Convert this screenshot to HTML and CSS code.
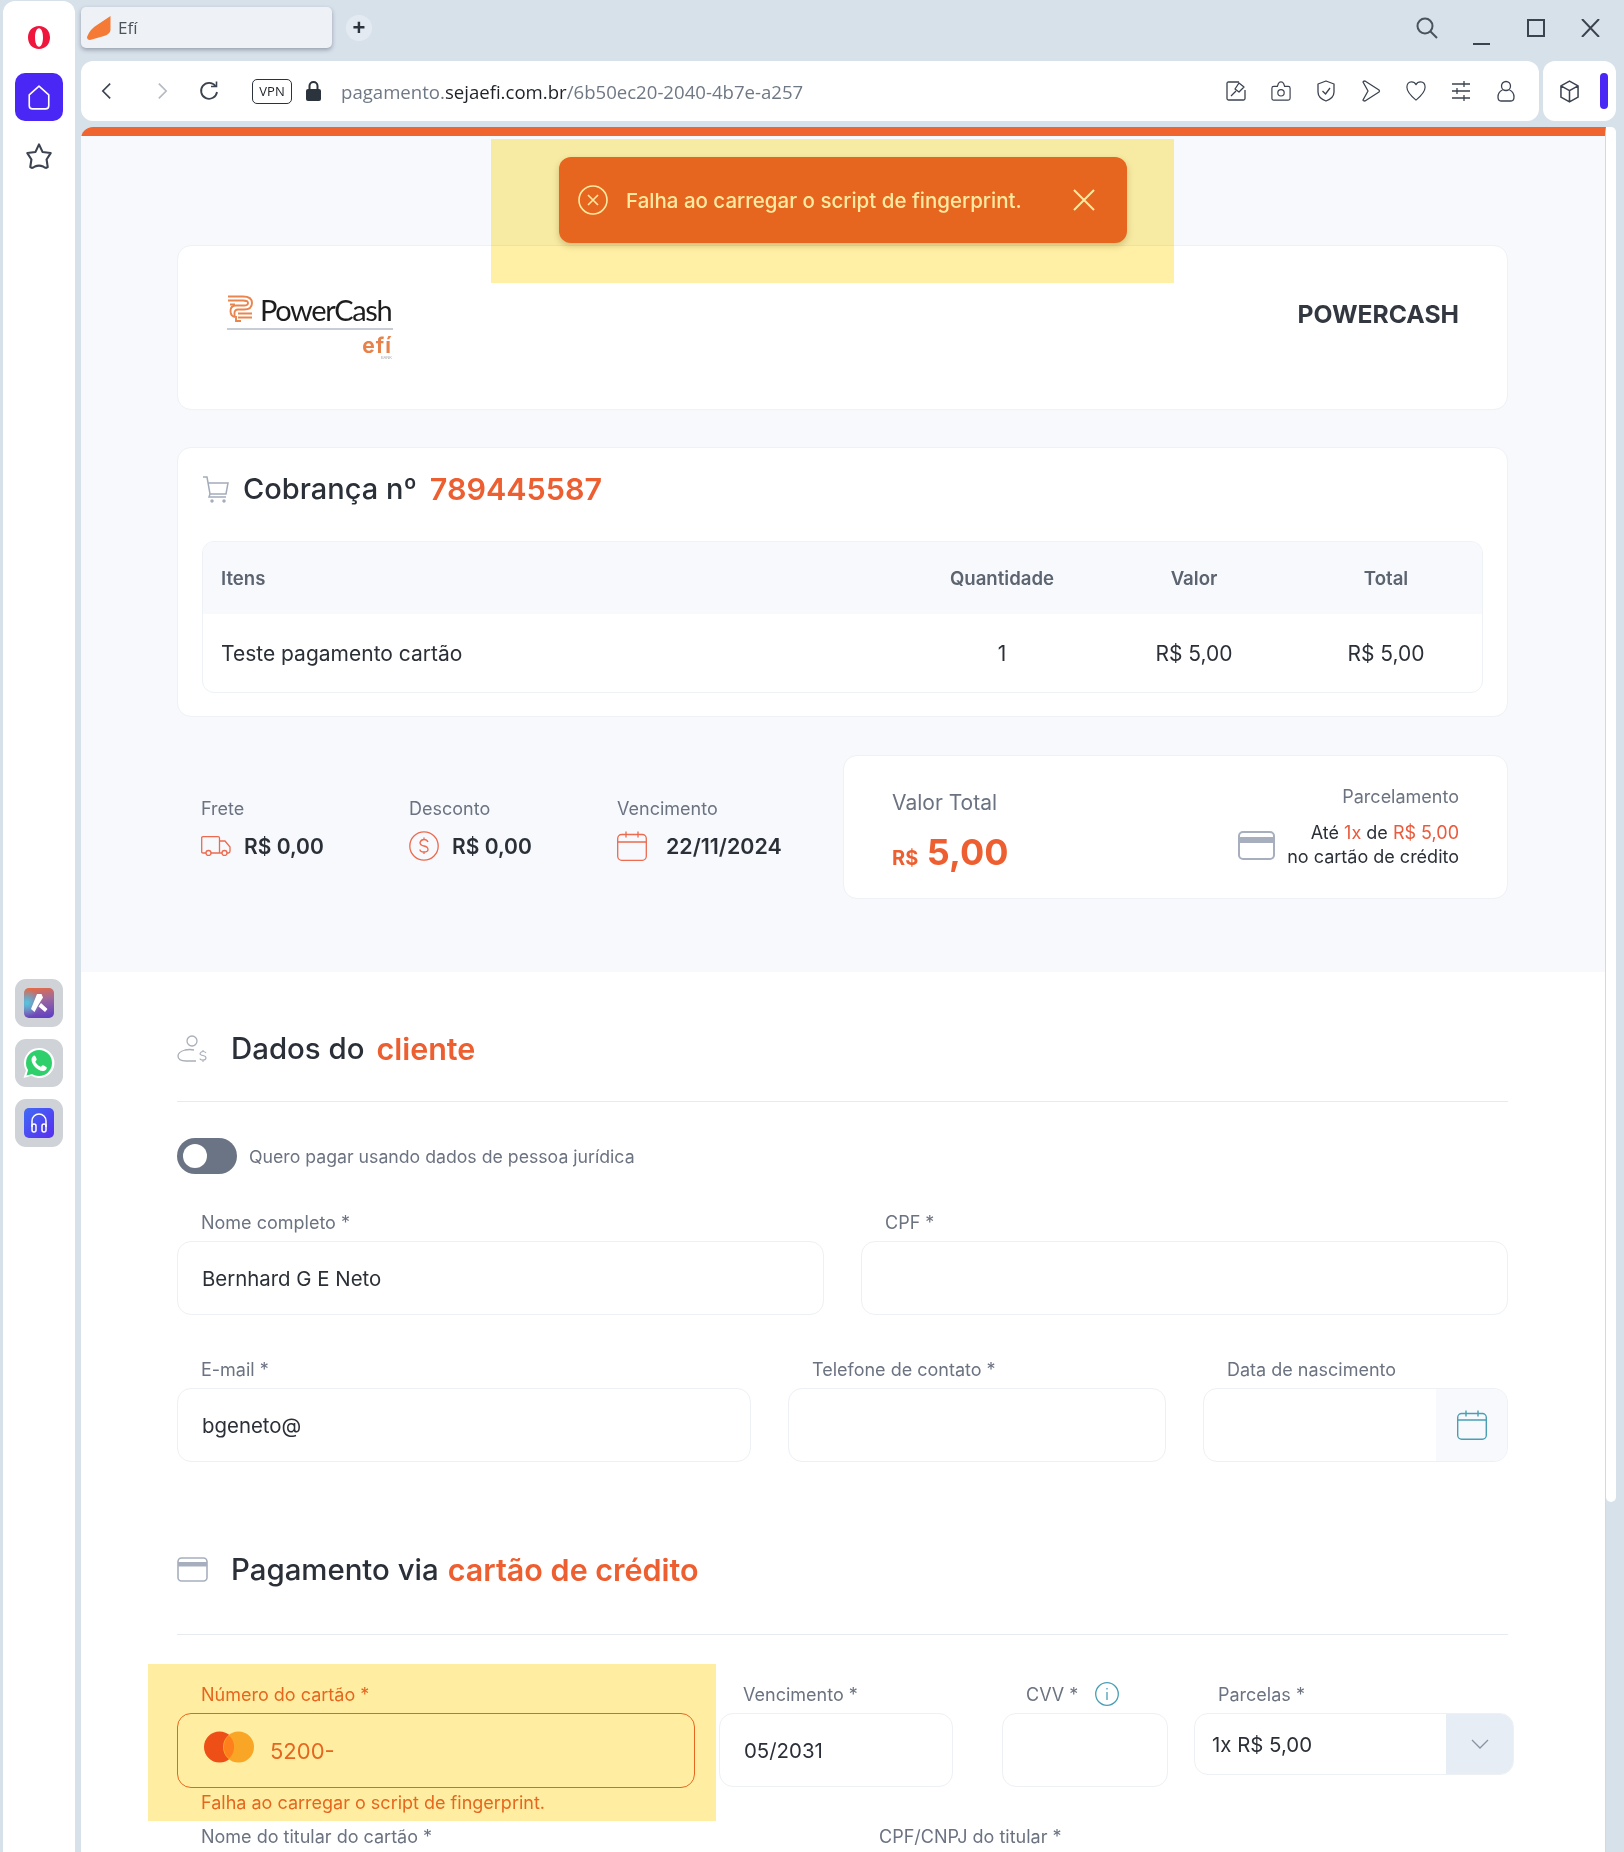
FILE: index.html
```html
<!DOCTYPE html>
<html lang="pt-BR">
<head>
  <meta charset="UTF-8">
  <title>Efí</title>
  <link rel="stylesheet" href="styles.css">
</head>
<body>

  <aside class="sidebar">
    <svg class="opera" viewBox="0 0 24 24"><path fill="#f0153c" fill-rule="evenodd" d="M12 .5C5.400.5 1 5.600 1 12s4.400 11.500 11 11.500S23 18.400 23 12 18.600.5 12 .5zm0 2.300c2.400 0 4 4.100 4 9.200s-1.600 9.200-4 9.200-4-4.100-4-9.200 1.600-9.200 4-9.200z"/></svg>
    <div class="side-home">
      <svg viewBox="0 0 24 24" width="26" height="30" fill="none" stroke="#fff" stroke-width="1.500"><path d="M12 2 L21 10 V20 Q21 23 18 23 H6 Q3 23 3 20 V10 Z" stroke-linejoin="round"/></svg>
    </div>
    <svg class="side-star" viewBox="0 0 24 24" fill="none" stroke="#3b4350" stroke-width="1.800" stroke-linejoin="round"><path d="M12 2 L15 8.500 L22 9.500 L18.500 15 L19.500 21.500 Q18 23 15.500 21 Q12 19.500 8.500 21 Q6 23 4.500 21.500 L5.500 15 L2 9.500 L9 8.500 Z"/></svg>

    <div class="side-apps">
      <div class="app-tile">
        <div class="app-icon app-aria">
          <svg viewBox="0 0 30 30" width="30" height="30" fill="#fff"><path d="M13 6h4.500l1.500 3.500-5 8-3.500 6.500-3.500-3zM17 15l6.500 6-2.500 3-6.500-5.500z"/></svg>
        </div>
      </div>
      <div class="app-tile">
        <svg viewBox="0 0 32 32" width="32" height="32"><path fill="#fff" d="M16 1a15 15 0 0 0-13 22.500L.5 31l8-2.300A15 15 0 1 0 16 1z"/><circle cx="16" cy="16" r="13" fill="#2fd06c"/><path fill="#2fd06c" d="M3.500 28.500l2-7 6 5z"/><path fill="#fff" d="M11.500 8.500c-1.200 0-3 1.700-3 4.200 0 4.300 5.500 11 11.500 11.300 2.200 0 3.800-1.700 3.800-3.300 0-.6-3.300-2.400-4-2.400-.8 0-1.400 1.500-2.100 1.500-1.400 0-5.300-3.700-5.300-5.200 0-.7 1.300-1.300 1.300-2.200 0-.8-1.500-3.900-2.200-3.900z"/></svg>
      </div>
      <div class="app-tile">
        <div class="app-icon app-support">
          <svg viewBox="0 0 30 30" width="30" height="30" fill="none" stroke="#fff" stroke-width="1.500"><path d="M8 19v-6a7 7 0 0 1 14 0v6"/><rect x="8" y="16" width="4" height="8" rx="2"/><rect x="18" y="16" width="4" height="8" rx="2"/></svg>
        </div>
      </div>
    </div>
  </aside>

  <div class="browser">
    <div class="tabstrip">
      <div class="tab">
        <svg viewBox="0 0 24 24" width="24" height="24"><path fill="#f47a35" d="M23.500 0V14Q23 18 17 20L3 24Q0 24 0 21Q3 13 10 9Z"/></svg>
        <span class="tab-title">Efí</span>
      </div>
      <div class="new-tab">+</div>
      <div class="window-controls">
        <svg class="win-search" viewBox="0 0 22 22" fill="none" stroke="#4a525c" stroke-width="2"><circle cx="9" cy="9" r="7.500"/><path d="M14.500 14.500 L21 21"/></svg>
        <span class="win-min"></span>
        <span class="win-max"></span>
        <svg class="win-close" viewBox="0 0 19 18" fill="none" stroke="#3b4350" stroke-width="2"><path d="M1 0 L18 18 M18 0 L1 18"/></svg>
      </div>
    </div>

    <div class="toolbar">
      <div class="addressbar">
        <svg class="nav-back" viewBox="0 0 12 20" fill="none" stroke="#3b4350" stroke-width="1.800"><path d="M10 2 L2 10 L10 18"/></svg>
        <svg class="nav-forward" viewBox="0 0 12 20" fill="none" stroke="#b4bac2" stroke-width="1.800"><path d="M2 2 L10 10 L2 18"/></svg>
        <svg class="nav-reload" viewBox="0 0 20 20" fill="none" stroke="#3b4350" stroke-width="1.800"><path d="M16.500 5A8 8 0 1 0 18 11"/><path d="M12 5.500 H17.500 V0.500" stroke-width="1.600"/></svg>
        <span class="vpn">VPN</span>
        <svg class="lock" viewBox="0 0 15 20"><path fill="none" stroke="#2b333d" stroke-width="2" d="M3.500 9V5a4 4 0 0 1 8 0v4"/><rect y="8" width="15" height="12" rx="2" fill="#2b333d"/></svg>
        <span class="url"><span class="url-dim">pagamento.</span>sejaefi.com.br<span class="url-dim">/6b50ec20-2040-4b7e-a257</span></span>
        <div class="tool-icons">
          <svg viewBox="0 0 20 20"><path d="M13 1H2.500Q1 1 1 2.500V17.500Q1 19 2.500 19H17.500Q19 19 19 17.500V9"/><path d="M13 2 L18 6 L13 11 L9 8 Z M10 10 L5 15"/></svg>
          <svg viewBox="0 0 22 22"><path d="M3 6H7L8 3Q9 1 11 1T14 3L15 6H19Q21 6 21 8V19Q21 21 19 21H3Q1 21 1 19V8Q1 6 3 6Z"/><circle cx="11" cy="13" r="3.500"/></svg>
          <svg viewBox="0 0 20 22"><path d="M10 1 L18 4 V12 Q18 18 10 21 Q2 18 2 12 V4 Z"/><path d="M6.500 11 L9.500 14 L14 8"/></svg>
          <svg viewBox="0 0 20 22"><path d="M2 2 Q2 1 4 1 L18 10 Q19 11 18 12 L4 21 Q2 21 2 20 L7 11 Z"/></svg>
          <svg viewBox="0 0 22 22"><path d="M11 21 Q1 13 1 7 Q1 1 6 1 Q9.500 1 11 4 Q12.500 1 16 1 Q21 1 21 7 Q21 13 11 21 Z"/></svg>
          <svg viewBox="0 0 20 20"><path d="M1 3H19M1 10H19M1 17H19M13 0V6M6 7V13M13 14V20"/></svg>
          <svg viewBox="0 0 18 22"><circle cx="9" cy="6" r="4.500"/><path d="M5.500 10Q1 12 1 17Q1 21 4 21H14Q17 21 17 17Q17 12 12.500 10"/></svg>
        </div>
      </div>
      <div class="ext-box">
        <svg viewBox="0 0 20 24" width="19" height="23" fill="none" stroke="#3b4350" stroke-width="1.600" stroke-linejoin="round"><path d="M10 1 L19 6 V18 L10 23 L1 18 V6 Z M1 6 L10 11 L19 6 M10 11 V23"/></svg>
        <span class="ext-bar"></span>
      </div>
    </div>

    <div class="viewport">
      <main class="page">
        <div class="highlight-toast"></div>
        <div class="toast">
          <svg viewBox="0 0 30 30" width="30" height="30" fill="none" stroke="#fde9a0" stroke-width="1.600"><circle cx="15" cy="15" r="14"/><path d="M10 10 L20 20 M20 10 L10 20"/></svg>
          <span class="toast-text">Falha ao carregar o script de fingerprint.</span>
          <svg class="toast-close" viewBox="0 0 22 22" width="22" height="22" fill="none" stroke="#fde9a0" stroke-width="2"><path d="M1 1 L21 21 M21 1 L1 21"/></svg>
        </div>

        <section class="top-area">
          <div class="card card-merchant">
            <div class="logo">
              <div class="logo-main">
                <svg viewBox="0 0 26 28" width="26" height="28" fill="none" stroke="#e9864f" stroke-width="1.900"><path d="M1 1.500H16Q25 1.500 25 8Q25 14.500 17 14.500H11Q7.500 14.500 7.500 18V22"/><path d="M1 5.500H16Q21 5.500 21 8Q21 10.500 17 10.500H9Q3.500 10.500 3.500 16Q3.500 22 9 22V26H14"/><path d="M3 9.500H8M11 18.500H25M11 22.500H25"/></svg>
                <span class="logo-name">PowerCash</span>
              </div>
              <div class="logo-sub">
                <span class="logo-efi">efí</span>
                <span class="logo-bank">BANK</span>
              </div>
            </div>
            <div class="merchant-name">POWERCASH</div>
          </div>

          <div class="card card-charge">
            <h2 class="charge-title">
              <svg viewBox="0 0 28 28" width="28" height="28" fill="none" stroke="#a3acbb" stroke-width="1.500"><path d="M1 2H5L8 19H24L26 8H6"/><path d="M8 19L7 22H24" /><circle cx="10" cy="26" r="1" fill="#a3acbb"/><circle cx="22" cy="26" r="1" fill="#a3acbb"/></svg>
              <span>Cobrança nº</span>
              <strong>789445587</strong>
            </h2>
            <div class="items">
              <div class="items-row items-head">
                <span class="col-name">Itens</span>
                <span>Quantidade</span>
                <span>Valor</span>
                <span>Total</span>
              </div>
              <div class="items-row">
                <span class="col-name">Teste pagamento cartão</span>
                <span>1</span>
                <span>R$ 5,00</span>
                <span>R$ 5,00</span>
              </div>
            </div>
          </div>

          <div class="summary">
            <div class="facts">
              <div class="fact fact-frete">
                <div class="fact-label">Frete</div>
                <div class="fact-value">
                  <svg viewBox="0 0 30 20" width="30" height="20" fill="none" stroke="#ec6a4f" stroke-width="1.300"><path d="M5 17H2Q0.700 17 0.700 16V2Q.7 .7 2 .7H17Q18.500 .7 18.500 2V17H10M18.500 5H24L29 11V15Q29 17 27.500 17H26M18.500 17H21"/><circle cx="7.500" cy="17" r="2.500"/><circle cx="23.500" cy="17" r="2.500"/></svg>
                  <span>R$ 0,00</span>
                </div>
              </div>
              <div class="fact fact-desc">
                <div class="fact-label">Desconto</div>
                <div class="fact-value">
                  <svg viewBox="0 0 30 30" width="30" height="30" fill="none" stroke="#ec6a4f" stroke-width="1.300"><circle cx="15" cy="15" r="14.200"/><path d="M19 11Q18 8.500 15 8.500T11 11.500Q11 14.300 15 15T19 18.500Q19 21 15 21T11 18.500M15 6.500V8.500M15 21V23"/></svg>
                  <span>R$ 0,00</span>
                </div>
              </div>
              <div class="fact fact-venc">
                <div class="fact-label">Vencimento</div>
                <div class="fact-value">
                  <svg viewBox="0 0 30 30" width="30" height="30" fill="none" stroke="#ec6a4f" stroke-width="1.300"><rect x=".7" y="3.500" width="28.600" height="25.800" rx="4"/><path d="M.7 11H29.300M9 .5V6.500M21 .5V6.500"/></svg>
                  <span class="fact-date">22/11/2024</span>
                </div>
              </div>
            </div>
            <div class="card card-total">
              <div class="total-left">
                <div class="total-label">Valor Total</div>
                <div class="total-value"><small>R$</small> 5,00</div>
              </div>
              <div class="total-right">
                <div class="plan-label">Parcelamento</div>
                <div class="plan-info">
                  <svg viewBox="0 0 37 29" width="37" height="29"><rect x="1" y="1" width="35" height="27" rx="4" fill="#fff" stroke="#a7afbf" stroke-width="2"/><rect x="1" y="6" width="35" height="6" fill="#a7afbf"/></svg>
                  <div class="plan-text">Até <em>1x</em> de <em>R$ 5,00</em><br>no cartão de crédito</div>
                </div>
              </div>
            </div>
          </div>
        </section>

        <section class="form-area">
          <h2 class="section-title">
            <svg viewBox="0 0 31 28" width="31" height="28" fill="none" stroke="#a9aeb8" stroke-width="1.300"><circle cx="15" cy="6" r="5"/><path d="M17 15Q13 14 8 15Q1 17 1 21Q1 26 9 26H19"/><path d="M29 18Q28 16.500 26 16.500T23 18.500Q23 20 26 20.500T29 23Q29 25 26 25T23 23.500M26 15V16.500M26 25V27" stroke-width="1.100"/></svg>
            <span>Dados do</span>
            <strong class="title-key">cliente</strong>
          </h2>

          <div class="toggle-row">
            <span class="switch"><span class="switch-knob"></span></span>
            <span>Quero pagar usando dados de pessoa jurídica</span>
          </div>

          <div class="field-row row-name">
            <div class="field">
              <label>Nome completo *</label>
              <div class="input">Bernhard G E Neto</div>
            </div>
            <div class="field">
              <label>CPF *</label>
              <div class="input"></div>
            </div>
          </div>

          <div class="field-row row-contact">
            <div class="field">
              <label>E-mail *</label>
              <div class="input">bgeneto@</div>
            </div>
            <div class="field">
              <label>Telefone de contato *</label>
              <div class="input"></div>
            </div>
            <div class="field">
              <label>Data de nascimento</label>
              <div class="input input-date">
                <span class="date-addon">
                  <svg viewBox="0 0 30 30" width="30" height="30" fill="none" stroke="#4a9fb5" stroke-width="1.400"><rect x=".7" y="3.500" width="28.600" height="25.800" rx="4"/><path d="M.7 10H29.300M9 .5V6.500M21 .5V6.500"/></svg>
                </span>
              </div>
            </div>
          </div>

          <h2 class="section-title section-pay">
            <svg viewBox="0 0 31 25" width="31" height="25"><rect x="1" y="1" width="29" height="23" rx="3.500" fill="#fff" stroke="#a7afbf" stroke-width="1.600"/><rect x="1" y="5" width="29" height="4.500" fill="#a7afbf"/></svg>
            <span>Pagamento via</span>
            <strong class="title-key title-card">cartão de crédito</strong>
          </h2>

          <div class="pay-row">
            <div class="field field-error">
              <label>Número do cartão *</label>
              <div class="input input-card">
                <svg viewBox="0 0 50 32" width="50" height="32"><circle cx="15.500" cy="16" r="15.500" fill="#ee4f17"/><circle cx="34.500" cy="16" r="15.500" fill="#f9a526"/><path fill="#ff7f1c" d="M25 4.500a15.500 15.500 0 0 1 0 23 15.500 15.500 0 0 1 0-23z"/></svg>
                <span>5200-</span>
              </div>
              <div class="error-text">Falha ao carregar o script de fingerprint.</div>
            </div>
            <div class="field field-venc">
              <label>Vencimento *</label>
              <div class="input">05/2031</div>
            </div>
            <div class="field field-cvv">
              <label>CVV *
                <svg viewBox="0 0 24 24" width="24" height="24" fill="none" stroke="#4a9fb5" stroke-width="1.300"><circle cx="12" cy="12" r="11.300"/><path d="M12 10V18M12 6V7.500"/></svg>
              </label>
              <div class="input"></div>
            </div>
            <div class="field field-parcelas">
              <label>Parcelas *</label>
              <div class="input input-select">
                <span>1x R$ 5,00</span>
                <span class="select-addon">
                  <svg viewBox="0 0 18 10" width="18" height="10" fill="none" stroke="#8a93a0" stroke-width="1.300"><path d="M1 1 L9 9 L17 1"/></svg>
                </span>
              </div>
            </div>
          </div>

          <div class="field-row row-holder">
            <label>Nome do titular do cartão *</label>
            <label>CPF/CNPJ do titular *</label>
          </div>
        </section>
      </main>
      <div class="scrollbar"><span class="scroll-thumb"></span></div>
    </div>
  </div>

</body>
</html>
```

FILE: styles.css
```css
* {
  box-sizing: border-box;
}
html, body {
  margin: 0;
  height: 1852px;
  overflow: hidden;
}
body {
  display: flex;
  background: #d7e1ea;
  font-family: Inter, "Open Sans", sans-serif;
  color: #2b3038;
}

/* left opera sidebar */
.sidebar {
  width: 72px;
  margin: 1px 6px 0 3px;
  background: #fff;
  border-radius: 12px 12px 0 0;
  display: flex;
  flex-direction: column;
  align-items: center;
  padding-top: 24px;
}
.opera {
  width: 24px;
  height: 25px;
}
.side-home {
  width: 48px;
  height: 48px;
  margin-top: 23px;
  background: #4b27f5;
  border-radius: 10px;
  display: flex;
  align-items: center;
  justify-content: center;
}
.side-star {
  width: 28px;
  height: 28px;
  margin-top: 21px;
}
.side-apps {
  margin-top: 809px;
  display: flex;
  flex-direction: column;
  gap: 12px;
}
.app-tile {
  width: 48px;
  height: 48px;
  background: #cfd2d6;
  border-radius: 11px;
  display: flex;
  align-items: center;
  justify-content: center;
}
.app-icon {
  width: 30px;
  height: 30px;
  border-radius: 5px;
}
.app-aria {
  background:
    radial-gradient(circle at 10% 50%, #52c8e0 0, rgba(82, 200, 224, 0) 45%),
    linear-gradient(170deg, #ee6a3a 0%, #a06a9a 40%, #5a3cc8 100%);
}
.app-support {
  background: linear-gradient(135deg, #3f6cf5, #5a2cf0);
}

/* browser chrome */
.browser {
  flex: 1;
  min-width: 0;
  display: flex;
  flex-direction: column;
}
.tabstrip {
  height: 61px;
  display: flex;
  align-items: flex-start;
  padding-top: 7px;
}
.tab {
  width: 251px;
  height: 41px;
  background: #eef2f7;
  border-radius: 5px;
  box-shadow: 0 2px 4px rgba(70, 80, 95, 0.45);
  display: flex;
  align-items: center;
  padding-left: 6px;
  font-family: "Open Sans", sans-serif;
  font-size: 17px;
  color: #4a525c;
}
.tab-title {
  margin-left: 7px;
}
.new-tab {
  width: 26px;
  height: 26px;
  margin: 8px 0 0 14px;
  background: #e4eaf1;
  border-radius: 50%;
  text-align: center;
  font: bold 22px/25px "Liberation Sans", sans-serif;
  color: #2b333d;
}
.window-controls {
  margin-left: auto;
  display: flex;
  align-items: flex-start;
  padding: 10px 24px 0 0;
}
.win-search {
  width: 22px;
  height: 22px;
}
.win-min {
  width: 17px;
  height: 2px;
  margin: 26px 0 0 35px;
  background: #3b4350;
}
.win-max {
  width: 18px;
  height: 18px;
  margin: 2px 0 0 37px;
  border: 2px solid #3b4350;
}
.win-close {
  width: 19px;
  height: 18px;
  margin: 2px 0 0 36px;
}
.toolbar {
  height: 60px;
  display: flex;
  padding-right: 8px;
}
.addressbar {
  flex: 1;
  background: #fff;
  border-radius: 12px;
  margin-right: 4px;
  display: flex;
  align-items: center;
  position: relative;
}
.nav-back {
  width: 11px;
  height: 20px;
  margin-left: 20px;
}
.nav-forward {
  width: 11px;
  height: 20px;
  margin-left: 45px;
}
.nav-reload {
  width: 20px;
  height: 20px;
  margin-left: 31px;
}
.vpn {
  width: 40px;
  height: 25px;
  margin-left: 33px;
  border: 1.500px solid #2b333d;
  border-radius: 5px;
  font: 13px/22px "Open Sans", sans-serif;
  text-align: center;
  color: #1d2228;
}
.lock {
  width: 15px;
  height: 20px;
  margin-left: 14px;
}
.url {
  margin-left: 20px;
  font-family: "Open Sans", sans-serif;
  font-size: 18.600px;
  color: #1d2228;
  white-space: nowrap;
}
.url-dim {
  color: #6f7985;
}
.tool-icons {
  margin-left: auto;
  display: flex;
  align-items: center;
  gap: 25px;
  padding-right: 23px;
}
.tool-icons svg {
  width: 20px;
  height: 22px;
  fill: none;
  stroke: #3b4350;
  stroke-width: 1.300;
  stroke-linejoin: round;
}
.ext-box {
  width: 73px;
  background: #fff;
  border-radius: 12px;
  display: flex;
  align-items: center;
  padding-left: 17px;
}
.ext-bar {
  width: 8px;
  height: 36px;
  margin-left: 21px;
  background: #4b27f5;
  border-radius: 4px;
}
.viewport {
  flex: 1;
  display: flex;
  margin-top: 6px;
  padding-right: 8px;
  min-height: 0;
}
.scrollbar {
  width: 10px;
  flex: none;
}
.scroll-thumb {
  display: block;
  height: 1375px;
  background: #fff;
  border-radius: 0 6px 6px 6px;
}

/* page */
.page {
  flex: 1;
  min-width: 0;
  position: relative;
  background: #fff;
  border-top: 9px solid #f0642f;
  border-right: 1px solid #d5d9de;
  border-radius: 12px 0 0 0;
}
.highlight-toast {
  position: absolute;
  left: 410px;
  top: 3px;
  width: 683px;
  height: 144px;
  background: #fff0a5;
  mix-blend-mode: multiply;
  z-index: 2;
}
.toast {
  position: absolute;
  left: 478px;
  top: 21px;
  width: 568px;
  height: 86px;
  background: #e6661f;
  border-radius: 12px;
  box-shadow: 0 3px 6px rgba(120, 90, 20, 0.3);
  color: #fde9a0;
  display: flex;
  align-items: center;
  padding-left: 19px;
  z-index: 3;
}
.toast-text {
  margin-left: 18px;
  font-size: 20.500px;
  font-weight: 500;
  white-space: nowrap;
}
.toast-close {
  margin-left: auto;
  margin-right: 32px;
}
.top-area {
  height: 836px;
  background: #f7f9fc;
  padding: 109px 97px 0 96px;
}
.card {
  background: #fff;
  border: 1px solid #eef1f5;
  border-radius: 14px;
}
.card-merchant {
  height: 165px;
  display: flex;
  justify-content: space-between;
  padding: 49px 48px 0 49px;
}
.logo {
  width: 166px;
}
.logo-main {
  display: flex;
  align-items: flex-start;
  gap: 7px;
  height: 33px;
}
.logo-name {
  font-family: Lato, sans-serif;
  font-size: 29px;
  font-weight: 400;
  line-height: 30px;
  letter-spacing: -1.400px;
  color: #1d1d1d;
}
.logo-sub {
  border-top: 2px solid #c8ccd4;
  padding-top: 7px;
  padding-right: 1px;
  text-align: right;
  line-height: 1;
}
.logo-efi {
  display: block;
  font-size: 21px;
  font-weight: 700;
  line-height: 18px;
  letter-spacing: 1px;
  color: #e6824a;
}
.logo-bank {
  display: block;
  font-size: 4px;
  line-height: 6px;
  color: #a0a4aa;
}
.merchant-name {
  margin-top: 4px;
  font-size: 24.700px;
  line-height: 30px;
  font-weight: 700;
  color: #333840;
}
.card-charge {
  height: 270px;
  margin-top: 37px;
  padding: 0 24px;
}
.charge-title {
  height: 93px;
  padding-bottom: 12px;
  margin: 0;
  display: flex;
  align-items: center;
  font-size: 29px;
  font-weight: 500;
  gap: 13px;
}
.charge-title strong {
  font-size: 30.500px;
  font-weight: 600;
  color: #ed5f30;
}
.items {
  border: 1px solid #eef1f5;
  border-radius: 12px;
  overflow: hidden;
}
.items-row {
  display: grid;
  grid-template-columns: 1fr 192px 192px 192px;
  align-items: center;
  height: 78px;
  text-align: center;
  font-size: 21px;
}
.items-head {
  height: 72px;
  background: #f7f9fc;
  font-size: 18.600px;
  font-weight: 600;
  color: #5c6470;
}
.col-name {
  text-align: left;
  padding-left: 18px;
}

.summary {
  height: 144px;
  margin-top: 38px;
  display: flex;
}
.facts {
  display: flex;
  width: 666px;
  padding-top: 38px;
  padding-left: 24px;
}
.fact-frete, .fact-desc {
  width: 208px;
}
.fact-label {
  font-size: 18px;
  line-height: 32px;
  margin-bottom: 4px;
  color: #6b7280;
}
.fact-value {
  display: flex;
  align-items: center;
  gap: 13px;
  height: 34px;
  font-size: 21px;
  font-weight: 600;
}
.fact-date {
  margin-left: 6px;
  font-size: 21.400px;
}
.card-total {
  flex: 1;
  display: flex;
  justify-content: space-between;
  padding: 0 48px;
}
.total-label {
  margin-top: 32px;
  font-size: 21px;
  line-height: 30px;
  color: #6b7280;
}
.total-value {
  margin-top: 12px;
  font-size: 36px;
  line-height: 44px;
  font-weight: 700;
  color: #ed5f30;
}
.total-value small {
  font-size: 20px;
}
.total-right {
  text-align: right;
}
.plan-label {
  margin-top: 28px;
  font-size: 18px;
  line-height: 26px;
  color: #6b7280;
}
.plan-info {
  display: flex;
  align-items: center;
  gap: 12px;
  margin-top: 11px;
}
.plan-text {
  font-size: 18px;
  line-height: 24px;
}
.plan-text em {
  font-style: normal;
  color: #ea5a3c;
}

/* form */
.form-area {
  padding: 57px 97px 0 96px;
  background: #fff;
}
.section-title {
  margin: 0;
  height: 73px;
  padding-bottom: 33px;
  border-bottom: 1px solid #e6ebf0;
  display: flex;
  align-items: center;
  font-size: 29.400px;
  font-weight: 500;
}
.section-title svg {
  margin-right: 23px;
}
.title-key {
  margin-left: 12px;
  font-size: 30.500px;
  font-weight: 600;
  color: #ed5f30;
}
.title-card {
  margin-left: 9px;
}
.toggle-row {
  margin-top: 36px;
  display: flex;
  align-items: center;
  gap: 12px;
  font-size: 17.700px;
  color: #6b7280;
}
.switch {
  width: 60px;
  height: 36px;
  background: #6b7485;
  border-radius: 18px;
  padding: 6px;
}
.switch-knob {
  display: block;
  width: 24px;
  height: 24px;
  background: #fff;
  border-radius: 50%;
}
.field-row {
  display: grid;
  column-gap: 37px;
}
.row-name {
  grid-template-columns: 1fr 1fr;
  margin-top: 35px;
}
.row-contact {
  grid-template-columns: 574px 378px 1fr;
  margin-top: 41px;
}
.field label, .row-holder label {
  display: flex;
  align-items: center;
  height: 26px;
  margin-bottom: 6px;
  padding-left: 24px;
  font-size: 18px;
  color: #6b7280;
}
.input {
  height: 74px;
  border: 1px solid #edf0f4;
  border-radius: 14px;
  display: flex;
  align-items: center;
  padding-left: 24px;
  font-size: 20.400px;
  overflow: hidden;
}
.input-date {
  padding-left: 0;
  justify-content: flex-end;
}
.date-addon {
  width: 71px;
  height: 100%;
  background: #f7f9fc;
  display: flex;
  align-items: center;
  justify-content: center;
}
.section-pay {
  margin-top: 87px;
  height: 86px;
  padding-bottom: 45px;
}
.pay-row {
  display: flex;
  align-items: flex-start;
  margin: 29px 0 0 -29px;
}
.pay-row .field {
  flex: none;
}
.field-error {
  width: 568px;
  height: 157px;
  padding: 17px 21px 0 29px;
  background: #ffeea1;
  color: #e6661f;
}
.field-error label {
  color: #e6661f;
}
.input-card {
  height: 75px;
  border-color: #e6661f;
  padding-left: 26px;
  color: #e6661f;
  font-size: 22px;
  gap: 16px;
}
.input-card svg {
  margin-bottom: 8px;
}
.error-text {
  margin-top: 2px;
  padding-left: 24px;
  font-size: 18px;
  line-height: 26px;
}
.field-venc, .field-cvv, .field-parcelas {
  padding-top: 17px;
}
.field-venc {
  width: 234px;
  margin-left: 3px;
}
.field-cvv {
  width: 166px;
  margin-left: 49px;
}
.field-parcelas {
  width: 320px;
  margin-left: 26px;
}
.field-cvv svg {
  margin-left: 17px;
}
.input-select {
  height: 62px;
  justify-content: space-between;
  padding-left: 17px;
}
.select-addon {
  width: 67px;
  height: 100%;
  background: #e6edf5;
  display: flex;
  align-items: center;
  justify-content: center;
}
.row-holder {
  grid-template-columns: 678px 1fr;
  margin-top: 2px;
  column-gap: 0;
}
```
